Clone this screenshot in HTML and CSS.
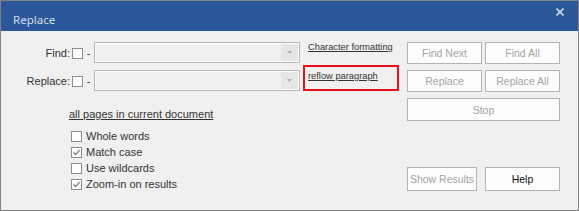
FILE: index.html
```html
<!DOCTYPE html>
<html>
<head>
<meta charset="utf-8">
<link rel="stylesheet" href="styles.css">
</head>
<body>
<div class="window">
  <div class="titlebar">
    <span class="title">Replace</span>
    <svg class="close" width="8" height="8" viewBox="0 0 8 8"><path d="M0.5 0.5 L7.5 7.5 M7.5 0.5 L0.5 7.5" stroke="#cfd6e2" stroke-width="1.6" fill="none"/></svg>
  </div>
  <div class="content">
    <div class="left">
      <div class="row">
        <span class="lbl">Find:</span>
        <span class="cb"></span>
        <span class="dash">-</span>
        <div class="combo"><span class="drop"><svg width="5" height="3" viewBox="0 0 5 3"><path d="M0 0 H5 L2.5 3 Z" fill="#b0b0b0"/></svg></span></div>
        <span class="linkbox"><a class="link">Character formatting</a></span>
      </div>
      <div class="row row2">
        <span class="lbl">Replace:</span>
        <span class="cb"></span>
        <span class="dash">-</span>
        <div class="combo"><span class="drop"><svg width="5" height="3" viewBox="0 0 5 3"><path d="M0 0 H5 L2.5 3 Z" fill="#b0b0b0"/></svg></span></div>
        <span class="linkbox highlight"><a class="link">reflow paragraph</a></span>
      </div>
      <a class="pages">all pages in current document</a>
      <ul class="opts">
        <li><span class="cb"></span>Whole words</li>
        <li><span class="cb"><svg width="9" height="9" viewBox="0 0 9 9"><path d="M1.5 4.5 L3.6 6.6 L7.6 2.2" stroke="#6e6e6e" stroke-width="1.2" fill="none"/></svg></span>Match case</li>
        <li><span class="cb"></span>Use wildcards</li>
        <li><span class="cb"><svg width="9" height="9" viewBox="0 0 9 9"><path d="M1.5 4.5 L3.6 6.6 L7.6 2.2" stroke="#6e6e6e" stroke-width="1.2" fill="none"/></svg></span>Zoom-in on results</li>
      </ul>
    </div>
    <div class="right">
      <div class="btngrid">
        <button class="btn">Find Next</button>
        <button class="btn">Find All</button>
        <button class="btn">Replace</button>
        <button class="btn">Replace All</button>
        <button class="btn stop">Stop</button>
      </div>
      <div class="bottom">
        <button class="btn results">Show Results</button>
        <button class="btn help">Help</button>
      </div>
    </div>
  </div>
</div>
</body>
</html>
```

FILE: styles.css
```css
html, body {
  margin: 0;
  padding: 0;
  background: #f0f0f0;
}
.window {
  width: 579px;
  height: 211px;
  box-sizing: border-box;
  border: 1px solid #828282;
  background: #f0f0f0;
  font-family: "Liberation Sans", Arial, sans-serif;
  font-size: 11px;
  color: #333;
  overflow: hidden;
}
.titlebar {
  height: 30px;
  background: #2b579a;
  display: flex;
  justify-content: space-between;
  align-items: flex-start;
  padding: 0 14px 0 12px;
}
.title {
  font-family: "Noto Sans", sans-serif;
  font-size: 11.5px;
  line-height: 15px;
  margin-top: 11px;
  color: #d3dbe8;
}
.close {
  margin-top: 7px;
}
.content {
  display: flex;
  padding-top: 11px;
}
.left {
  width: 398px;
  display: flex;
  flex-direction: column;
}
.row {
  display: flex;
  align-items: center;
  height: 21px;
}
.row2 {
  margin-top: 7px;
}
.lbl {
  width: 69px;
  text-align: right;
  color: #333;
}
.cb {
  width: 11px;
  height: 11px;
  box-sizing: border-box;
  border: 1px solid #8e8e8e;
  background: #fff;
  display: flex;
  align-items: center;
  justify-content: center;
  flex: none;
}
.row .cb {
  margin-left: 2px;
  margin-top: 1px;
}
.dash {
  width: 11px;
  text-align: center;
}
.combo {
  width: 206px;
  height: 21px;
  box-sizing: border-box;
  border: 1px solid #b8b8b8;
  box-shadow: inset 0 0 0 1px #fbfbfb;
  background: #f0f0f0;
  display: flex;
  justify-content: flex-end;
  padding: 1px;
}
.drop {
  width: 17px;
  background: #e6e6e6;
  display: flex;
  justify-content: center;
  padding-top: 7px;
  box-sizing: border-box;
}
.drop svg {
  display: block;
}
.linkbox {
  align-self: flex-start;
  margin-left: 3px;
  width: 96px;
  box-sizing: border-box;
  border: 2px solid transparent;
  padding: 0 0 0 3px;
  margin-top: -4px;
  line-height: 13px;
}
.highlight {
  border-color: #e8101a;
  margin-top: -5px;
  padding-top: 2px;
  padding-bottom: 6px;
}
.link {
  font-size: 9.3px;
  color: #333;
  text-decoration: underline;
  white-space: nowrap;
}
.pages {
  margin-left: 68px;
  margin-top: 17px;
  line-height: 13px;
  text-decoration: underline;
  color: #333;
  align-self: flex-start;
}
.opts {
  list-style: none;
  margin: 7px 0 0 70px;
  padding: 0;
}
.opts li {
  display: flex;
  align-items: center;
  height: 16px;
  color: #333;
}
.opts .cb {
  margin-right: 4px;
}
.right {
  margin-left: 8px;
  display: flex;
  flex-direction: column;
}
.btngrid {
  display: grid;
  grid-template-columns: 75px 75px;
  grid-auto-rows: 22px;
  column-gap: 3px;
  row-gap: 6px;
}
.btn {
  font-family: "Liberation Sans", Arial, sans-serif;
  font-size: 10.5px;
  color: #a3a3a3;
  background: #fdfdfd;
  border: 1px solid #b3b3b3;
  border-radius: 0;
  padding: 0;
  margin: 0;
  box-sizing: border-box;
  white-space: nowrap;
}
.stop {
  grid-column: 1 / span 2;
  height: 23px;
}
.bottom {
  display: flex;
  margin-top: 47px;
}
.results {
  width: 70px;
  height: 24px;
}
.help {
  width: 75px;
  height: 24px;
  margin-left: 8px;
  color: #111;
}
```
